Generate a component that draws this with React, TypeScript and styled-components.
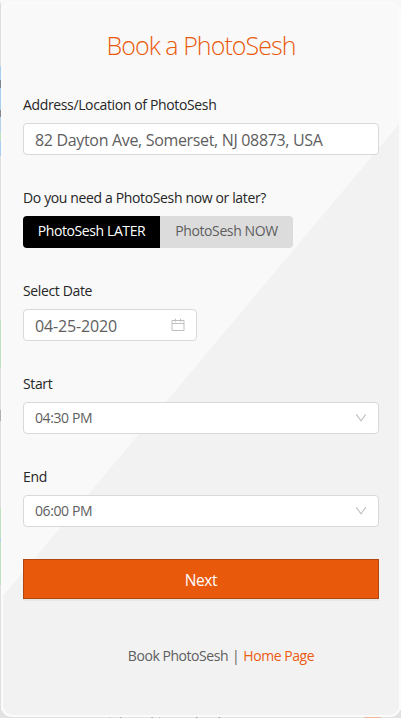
import React from "react";
import styled, { createGlobalStyle } from "styled-components";

const Global = createGlobalStyle`
  * { box-sizing: border-box; }
  body {
    margin: 0;
    background: #e9e9e9;
    font-family: "Open Sans", "Noto Sans", sans-serif;
    color: #5e5e5e;
  }
`;

/* The strip of the map page that stays visible around the card. */
const Page = styled.div`
  position: relative;
  width: 401px;
  height: 718px;
  overflow: hidden;
  padding: 2px 0 0 1px;
  background: linear-gradient(
    180deg,
    #f6f6f6 0 3px, #dedede 3px 66px, #a9cdf0 66px 80px, #7d8791 80px 88px,
    #a9cdf0 88px 110px, #85888c 110px 117px, #b3d2ee 117px 132px, #bfe0c3 132px 141px,
    #a9cdf0 141px 156px, #dedede 156px 320px, #bfdfc3 320px 368px, #dedede 368px 410px,
    #b0b0b0 410px 421px, #dedede 421px 508px, #bfdfc3 508px 538px, #abcdf0 538px 541px,
    #bfdfc3 541px 585px, #dedede 585px
  ) 0 0 / 1px 100% no-repeat, linear-gradient(#f8f8f8 0 30px, #fdfdfd 30px);
`;

const Beneath = styled.div`
  position: absolute;
  left: 0;
  right: 0;
  bottom: 0;
  height: 8px;
  background: #e2e2e2;
  overflow: hidden;
`;

const BeneathText = styled.span`
  position: absolute;
  left: 78px;
  top: 2px;
  font-size: 13px;
  line-height: 16px;
  letter-spacing: -0.2px;
  color: #8d8d8d;
  white-space: nowrap;
`;

const BeneathMark = styled.span`
  position: absolute;
  left: 364px;
  bottom: 0;
  width: 17px;
  height: 1px;
  background: #efb79b;
`;

const Card = styled.main`
  position: relative;
  display: flex;
  flex-direction: column;
  width: 400px;
  height: 715px;
  padding: 22px 20px 0;
  border: 2px solid #fbfbfb;
  border-radius: 11px;
  background: linear-gradient(130deg, #f9f9f9 50%, #f2f2f2 50.1%) padding-box, #fbfbfb;
`;

const Title = styled.h1`
  height: 36px;
  margin: 0 0 33px;
  text-align: center;
  font-size: 25px;
  font-weight: 300;
  line-height: 38px;
  letter-spacing: -0.95px;
  color: #e9590c;
`;

const Field = styled.div`
  height: 93px;
  flex: none;
`;

const Label = styled.label`
  display: block;
  height: 22px;
  margin-bottom: 6px;
  font-size: 14px;
  line-height: 20px;
  letter-spacing: -0.36px;
  white-space: nowrap;
  color: #262626;
`;

const Control = styled.div<{ $width?: number; $large?: boolean; $spacing: number }>`
  display: flex;
  align-items: center;
  justify-content: space-between;
  width: ${(p) => (p.$width ? `${p.$width}px` : "auto")};
  height: 32px;
  padding: 0 11px;
  border: 1px solid #d9d9d9;
  border-radius: 4px;
  background: #fff;
  font-size: ${(p) => (p.$large ? 16 : 14)}px;
  line-height: ${(p) => (p.$large ? 28 : 30)}px;
  letter-spacing: ${(p) => p.$spacing}px;
  white-space: nowrap;
  svg { flex: none; }
`;

const Value = styled.span<{ $large?: boolean }>`
  padding-top: ${(p) => (p.$large ? 2 : 0)}px;
`;

const Toggle = styled.div`
  display: flex;
  width: 270px;
  height: 32px;
  border-radius: 4px;
  overflow: hidden;
`;

const Choice = styled.button<{ $active?: boolean }>`
  width: ${(p) => (p.$active ? 137 : 133)}px;
  padding: 0 0 2px;
  border: 0;
  background: ${(p) => (p.$active ? "#000" : "#dcdcdc")};
  color: ${(p) => (p.$active ? "#fff" : "#5e5e5e")};
  font: 400 14px/30px "Open Sans", "Noto Sans", sans-serif;
  letter-spacing: -0.4px;
  white-space: nowrap;
`;

const Next = styled.button`
  flex: none;
  height: 40px;
  margin-top: -1px;
  padding: 3px 0 0;
  border: 1px solid #b0470f;
  background: #e9590c;
  box-shadow: 0 2px 0 rgba(0, 0, 0, 0.045);
  color: #fff;
  font: 400 15.5px/35px "Open Sans", "Noto Sans", sans-serif;
  letter-spacing: -0.4px;
`;

const Footer = styled.footer`
  display: flex;
  justify-content: center;
  gap: 4px;
  margin-top: 46px;
  padding-left: 40px;
  font-size: 14px;
  line-height: 22px;
  letter-spacing: -0.45px;
  white-space: nowrap;
`;

const HomeLink = styled.a`
  color: #ed5a13;
`;

const Chevron = () => (
  <svg width="12" height="12" viewBox="0 0 12 12" fill="none" stroke="#bfbfbf" strokeWidth="1.1">
    <path d="M1.2 2.3 6 8.8 10.8 2.3" />
  </svg>
);

const Calendar = () => (
  <svg width="14" height="14" viewBox="0 0 14 14" fill="none" stroke="#bfbfbf">
    <path d="M1 2.5h12v10H1zM1 5.5h12M4.5.8v3M9.5.8v3" />
  </svg>
);

export default function App() {
  return (
    <>
      <Global />
      <Page>
        <Beneath>
          <BeneathText>appointment in a calendar</BeneathText>
          <BeneathMark />
        </Beneath>
        <Card>
          <Title>Book a PhotoSesh</Title>
          <Field>
            <Label>Address/Location of PhotoSesh</Label>
            <Control $large $spacing={-0.33}>
              <Value $large>82 Dayton Ave, Somerset, NJ 08873, USA</Value>
            </Control>
          </Field>
          <Field>
            <Label>Do you need a PhotoSesh now or later?</Label>
            <Toggle>
              <Choice $active>PhotoSesh LATER</Choice>
              <Choice>PhotoSesh NOW</Choice>
            </Toggle>
          </Field>
          <Field>
            <Label>Select Date</Label>
            <Control $large $width={174} $spacing={-0.15}>
              <Value $large>04-25-2020</Value>
              <Calendar />
            </Control>
          </Field>
          <Field>
            <Label>Start</Label>
            <Control $spacing={-0.4}>
              <Value>04:30 PM</Value>
              <Chevron />
            </Control>
          </Field>
          <Field>
            <Label>End</Label>
            <Control $spacing={-0.4}>
              <Value>06:00 PM</Value>
              <Chevron />
            </Control>
          </Field>
          <Next>Next</Next>
          <Footer>
            <span>Book PhotoSesh</span>
            <span>|</span>
            <HomeLink>Home Page</HomeLink>
          </Footer>
        </Card>
      </Page>
    </>
  );
}
